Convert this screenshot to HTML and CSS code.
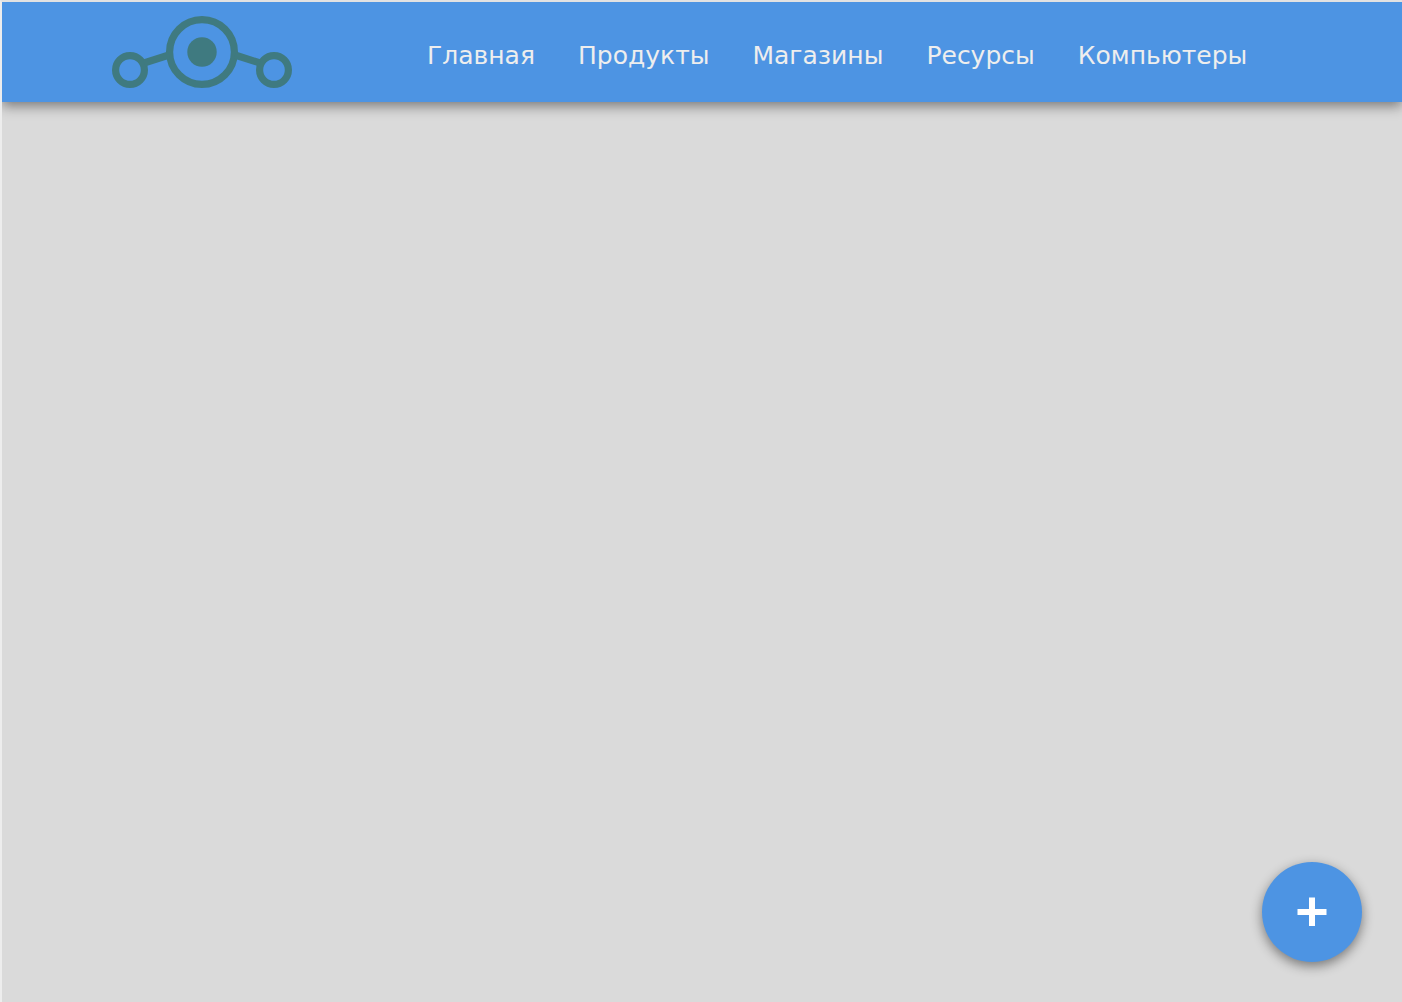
FILE: index.html
```html
<!DOCTYPE html>
<html lang="ru">
<head>
  <meta charset="utf-8">
  <meta name="viewport" content="width=device-width, initial-scale=1">
  <title>Главная</title>
  <link rel="stylesheet" href="styles.css">
</head>
<body>
  <div class="page">
    <header class="header">
      <a class="logo" href="#" aria-label="Главная">
        <svg class="logo-mark" viewBox="0 0 180 72" fill="none" stroke="currentColor" stroke-width="7.2" aria-hidden="true">
          <circle cx="90" cy="36" r="32.4"/>
          <circle cx="90" cy="36" r="14.7" fill="currentColor" stroke="none"/>
          <circle cx="18" cy="54" r="14.4"/>
          <circle cx="162" cy="54" r="14.4"/>
          <path d="M32 47 57 39M148 47 123 39"/>
        </svg>
      </a>
      <nav class="nav">
        <a class="nav-link" href="#">Главная</a>
        <a class="nav-link" href="#">Продукты</a>
        <a class="nav-link" href="#">Магазины</a>
        <a class="nav-link" href="#">Ресурсы</a>
        <a class="nav-link" href="#">Компьютеры</a>
      </nav>
    </header>
    <main class="content"></main>
    <button class="add-button" type="button" aria-label="Добавить">
      <svg class="add-icon" viewBox="0 0 30 30" fill="currentColor" aria-hidden="true">
        <path d="M12 .5h6V12h11.500v6H18v11h-6V18H.5v-6H12z"/>
      </svg>
    </button>
  </div>
</body>
</html>
```
FILE: styles.css
```css
* {
  box-sizing: border-box;
}

body {
  margin: 0;
  font-family: Verdana, "DejaVu Sans", sans-serif;
}

.page {
  display: flex;
  flex-direction: column;
  min-height: 100vh;
  border-top: 2px solid #e2e2e2;
  border-left: 2px solid #ededed;
  background: #dadada;
  overflow: hidden;
}

.header {
  display: flex;
  align-items: center;
  gap: 135px;
  height: 100px;
  padding: 0 110px;
  background: #4d94e3;
  box-shadow: 0 4px 12px rgba(0, 0, 0, 0.45);
}

.logo {
  color: #3f7a80;
}

.logo-mark {
  display: block;
  width: 180px;
  height: 72px;
}

.nav {
  display: flex;
  gap: 43px;
  padding-top: 8px;
}

.nav-link {
  color: #eeeeee;
  font-size: 25px;
  line-height: 32px;
  text-decoration: none;
}

.content {
  flex: 1;
}

.add-button {
  position: fixed;
  right: 40px;
  bottom: 40px;
  display: grid;
  place-items: center;
  width: 100px;
  height: 100px;
  padding: 0;
  border: 0;
  border-radius: 50%;
  background: #4d94e3;
  color: #ffffff;
  box-shadow: 0 4px 12px rgba(0, 0, 0, 0.45);
  cursor: pointer;
}

.add-icon {
  width: 30px;
  height: 30px;
}
```
